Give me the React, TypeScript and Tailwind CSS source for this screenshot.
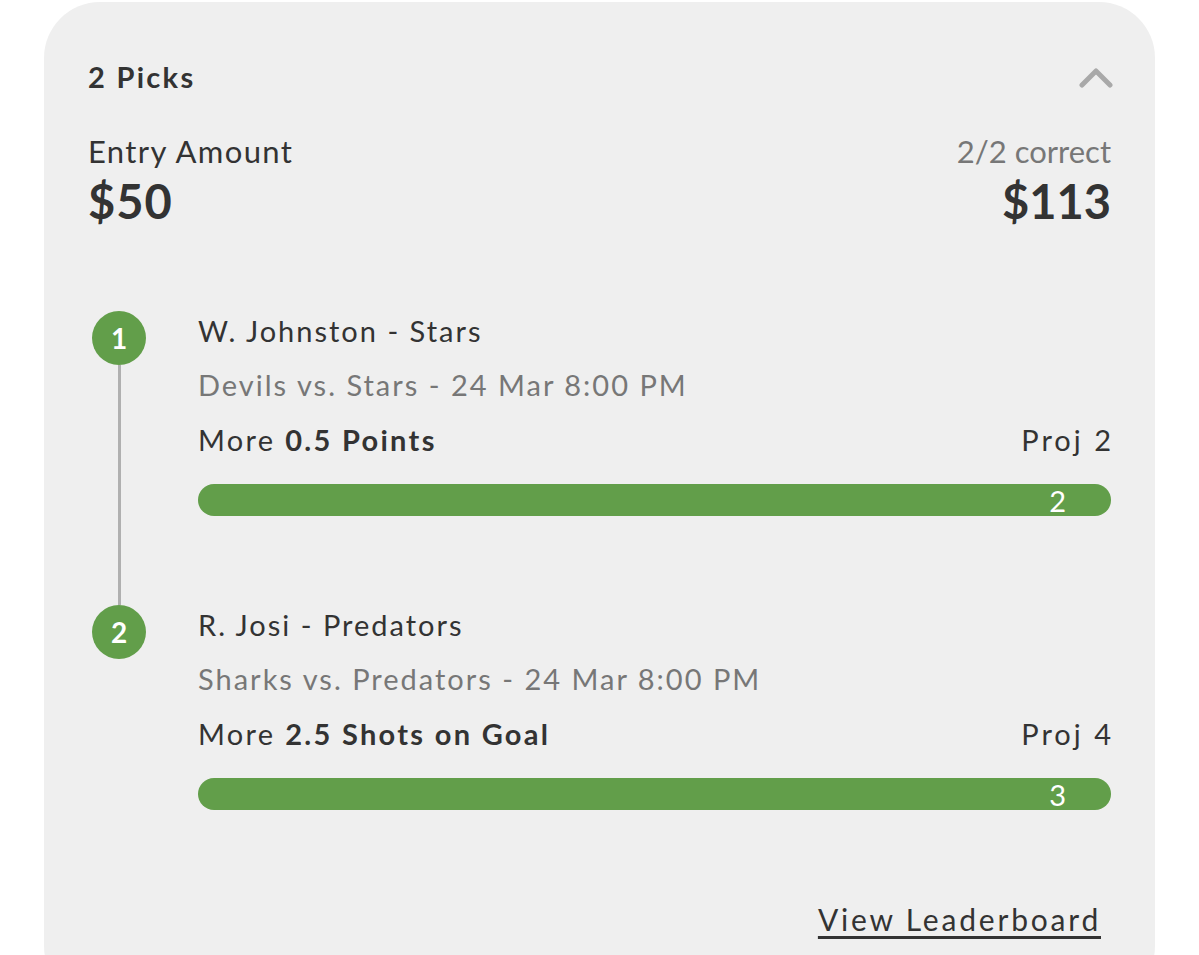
import React from "react";

type Pick = {
  n: number;
  name: string;
  game: string;
  stat: string;
  proj: string;
  actual: string;
  last?: boolean;
};

const picks: Pick[] = [
  { n: 1, name: "W. Johnston - Stars", game: "Devils vs. Stars - 24 Mar 8:00 PM", stat: "0.5 Points", proj: "Proj 2", actual: "2" },
  { n: 2, name: "R. Josi - Predators", game: "Sharks vs. Predators - 24 Mar 8:00 PM", stat: "2.5 Shots on Goal", proj: "Proj 4", actual: "3", last: true },
];

function PickRow({ p }: { p: Pick }) {
  return (
    <div className="flex">
      <div className="flex w-[62px] flex-col items-center">
        <div className="flex h-[54px] w-[54px] items-center justify-center rounded-full bg-[#629e4a] text-[28px] font-bold leading-none text-white">
          {p.n}
        </div>
        {!p.last && <div className="w-[3px] flex-1 bg-[#b0b0b0]" />}
      </div>
      <div className={"ml-[48px] flex-1 " + (p.last ? "" : "pb-[89px]")}>
        <div className="text-[29px] leading-[40px] tracking-[2px] text-[#333333]">{p.name}</div>
        <div className="mt-[14px] text-[29px] leading-[40px] tracking-[2px] text-[#777777]">{p.game}</div>
        <div className="mt-[15px] flex justify-between text-[29px] leading-[40px] text-[#333333]">
          <div className="tracking-[2.3px]">
            More <span className="font-bold">{p.stat}</span>
          </div>
          <div className="mr-[-3px] tracking-[3px]">{p.proj}</div>
        </div>
        <div className="mt-[24px] flex h-[32px] items-center justify-end rounded-full bg-[#629e4a] pr-[45px] text-[29px] leading-none text-white">
          {p.actual}
        </div>
      </div>
    </div>
  );
}

export default function App() {
  return (
    <div
      className="min-h-[955px] bg-white pt-[2px]"
      style={{ fontFamily: "Lato, 'Noto Sans', sans-serif" }}
    >
      <div className="ml-[44px] h-[1000px] w-[1111px] rounded-[56px] bg-[#efefef] px-[44px] pt-[55px]">
        <div className="flex items-center justify-between">
          <div className="text-[29px] font-bold leading-[40px] tracking-[2.3px] text-[#333333]">2 Picks</div>
          <svg width="34" height="22" viewBox="0 0 34 22" className="mr-[-2px]">
            <path d="M3 19 L17 5 L31 19" fill="none" stroke="#a9a9a9" strokeWidth="5" strokeLinecap="round" strokeLinejoin="round" />
          </svg>
        </div>
        <div className="mt-[34px] flex justify-between">
          <div>
            <div className="text-[31px] leading-[40px] tracking-[1.4px] text-[#333333]">Entry Amount</div>
            <div className="mt-[2px] text-[47px] font-bold leading-[56px] tracking-[1px] text-[#333333]">$50</div>
          </div>
          <div className="text-right">
            <div className="text-[31px] leading-[40px] text-[#777777]">2/2 correct</div>
            <div className="mt-[2px] text-[47px] font-bold leading-[56px] text-[#333333]">$113</div>
          </div>
        </div>
        <div className="mt-[82px] flex flex-col">
          {picks.map((p) => (
            <PickRow key={p.n} p={p} />
          ))}
        </div>
        <div className="mt-[89px] flex justify-end pr-[13px]">
          <a className="mr-[-3px] text-[30px] leading-[40px] tracking-[2.8px] text-[#333333] underline decoration-[3px] underline-offset-[5px]">
            View Leaderboard
          </a>
        </div>
      </div>
    </div>
  );
}
